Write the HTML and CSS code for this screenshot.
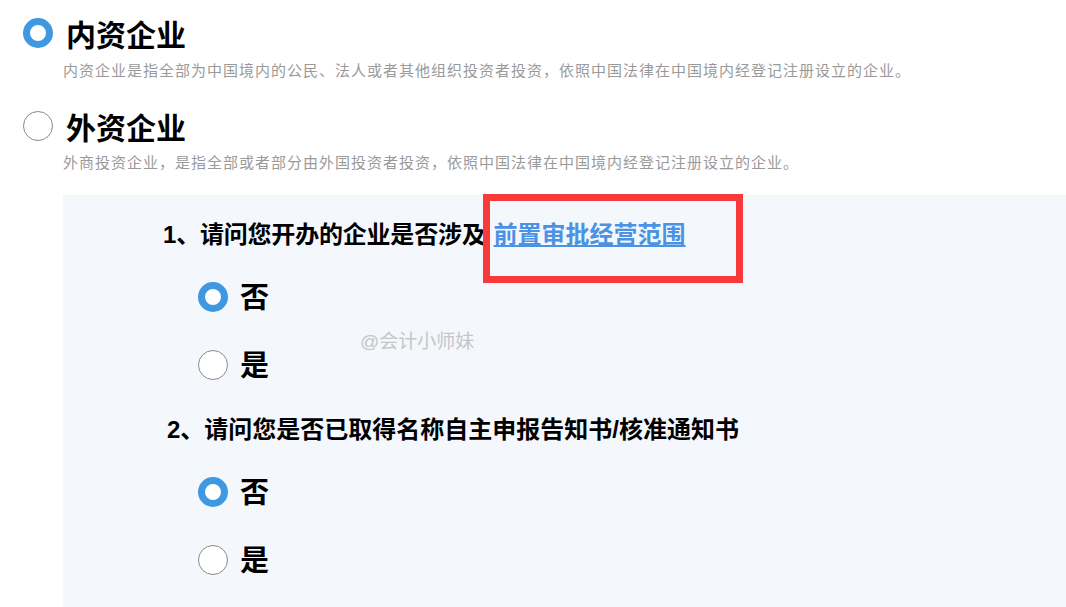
FILE: index.html
```html
<!DOCTYPE html>
<html lang="zh-CN">
<head>
  <meta charset="UTF-8">
  <title>企业类型</title>
  <link rel="stylesheet" href="styles.css">
</head>
<body>
  <div class="page">
    <div class="type">
      <div class="type-head">
        <span class="radio checked"></span>
        <span class="type-name">内资企业</span>
      </div>
      <p class="type-desc">内资企业是指全部为中国境内的公民、法人或者其他组织投资者投资，依照中国法律在中国境内经登记注册设立的企业。</p>
    </div>
    <div class="type">
      <div class="type-head">
        <span class="radio"></span>
        <span class="type-name">外资企业</span>
      </div>
      <p class="type-desc">外商投资企业，是指全部或者部分由外国投资者投资，依照中国法律在中国境内经登记注册设立的企业。</p>
    </div>

    <div class="panel">
      <p class="question q1">1、请问您开办的企业是否涉及<a class="link" href="#">前置审批经营范围</a></p>
      <div class="option">
        <span class="radio checked"></span>
        <span class="option-label">否</span>
      </div>
      <div class="option">
        <span class="radio"></span>
        <span class="option-label">是</span>
      </div>
      <p class="question q2">2、请问您是否已取得名称自主申报告知书/核准通知书</p>
      <div class="option">
        <span class="radio checked"></span>
        <span class="option-label">否</span>
      </div>
      <div class="option">
        <span class="radio"></span>
        <span class="option-label">是</span>
      </div>
      <span class="watermark">@会计小师妹</span>
    </div>

    <div class="mark"></div>
  </div>
</body>
</html>
```

FILE: styles.css
```css
*{
  padding: 0;
  margin: 0;
  box-sizing: border-box;
}
body{
  font-family: "Liberation Sans", "Noto Sans CJK SC", sans-serif;
  background-color: #fff;
  color: #000;
  overflow: hidden;
}
.page{
  position: relative;
  padding: 15px 0 0 23px;
  height: 607px;
}
.radio{
  display: inline-block;
  flex: none;
  width: 30px;
  height: 30px;
  border-radius: 50%;
  border: 1px solid #8a8a8a;
  background-color: #fff;
}
.radio.checked{
  border: 7px solid #3f98e2;
}
.type-head{
  display: flex;
  align-items: center;
  height: 36px;
}
.type-name{
  margin: 6px 0 0 13px;
  font-size: 30px;
  font-weight: bold;
  line-height: 36px;
}
.type-desc{
  margin: 10px 0 0 40px;
  font-size: 15px;
  line-height: 20px;
  letter-spacing: 1px;
  color: #9a9a9a;
}
.type + .type{
  margin-top: 27px;
}
.type + .type .type-desc{
  margin-top: 9px;
}
.panel{
  position: relative;
  margin: 22px 0 0 40px;
  height: 412px;
  padding: 25px 0 0 100px;
  background-color: #f4f7fc;
}
.question{
  font-size: 24px;
  font-weight: bold;
  line-height: 30px;
}
.q1{
  letter-spacing: -0.2px;
}
.q2{
  margin: 30px 0 0 4px;
}
.link{
  margin-left: 8px;
  letter-spacing: 0;
  color: #4b92e4;
  text-decoration: underline;
}
.option{
  display: flex;
  align-items: center;
  height: 40px;
  margin: 27px 0 0 35px;
}
.option + .option{
  margin-top: 28px;
}
.option-label{
  margin: 2px 0 0 12px;
  font-size: 29px;
  font-weight: bold;
  line-height: 40px;
}
.watermark{
  position: absolute;
  left: 297px;
  top: 136px;
  font-size: 19px;
  line-height: 22px;
  color: #c6c6c6;
}
.mark{
  position: absolute;
  left: 483px;
  top: 194px;
  width: 260px;
  height: 89px;
  border: 7px solid #f93a3a;
}
```
